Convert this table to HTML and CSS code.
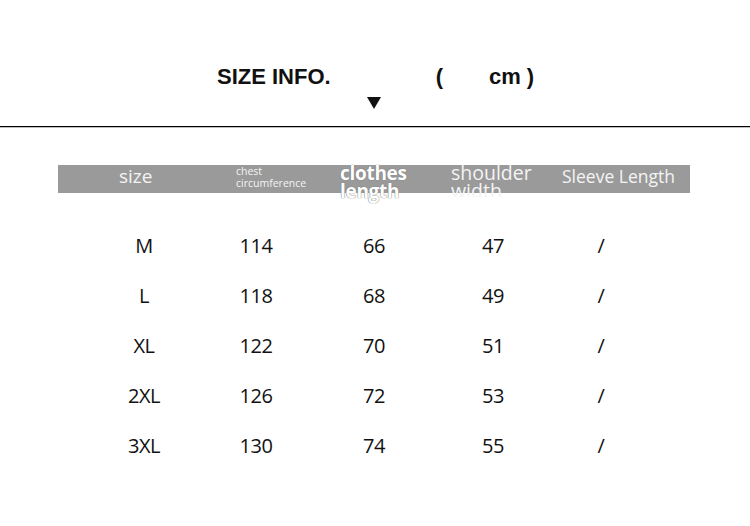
FILE: index.html
```html
<!DOCTYPE html>
<html>
<head>
<meta charset="utf-8">
<link rel="stylesheet" href="styles.css">
</head>
<body>
<div class="page">
  <div class="title-row">
    <span class="title">SIZE INFO.</span>
    <span class="paren-open">(</span>
    <span class="unit">cm</span>
    <span class="paren-close">)</span>
  </div>
  <div class="arrow"></div>
  <div class="rule"></div>
  <div class="head-bar">
    <div class="h-size">size</div>
    <div class="h-chest">chest<br>circumference</div>
    <div class="h-clothes">clothes<br>length</div>
    <div class="h-shoulder"><span class="clip">shoulder<br>width</span></div>
    <div class="h-sleeve">Sleeve Length</div>
  </div>
  <div class="rows">
    <div class="row"><span>M</span><span>114</span><span>66</span><span>47</span><span>/</span></div>
    <div class="row"><span>L</span><span>118</span><span>68</span><span>49</span><span>/</span></div>
    <div class="row"><span>XL</span><span>122</span><span>70</span><span>51</span><span>/</span></div>
    <div class="row"><span>2XL</span><span>126</span><span>72</span><span>53</span><span>/</span></div>
    <div class="row"><span>3XL</span><span>130</span><span>74</span><span>55</span><span>/</span></div>
  </div>
</div>
</body>
</html>
```
FILE: styles.css
```css
html, body {
  margin: 0;
  padding: 0;
  background: #ffffff;
}
.page {
  width: 750px;
  height: 526px;
  padding-top: 64px;
  box-sizing: border-box;
  overflow: hidden;
  color: #111;
}
.title-row {
  display: flex;
  height: 26px;
  line-height: 26px;
  padding-left: 217px;
  font-family: "Liberation Sans", Arial, sans-serif;
  font-weight: bold;
  font-size: 22px;
  white-space: nowrap;
}
.paren-open { margin-left: 105px; }
.unit { margin-left: 46px; }
.paren-close { margin-left: 6px; }
.arrow {
  margin-top: 7px;
  margin-left: 367px;
  width: 0;
  height: 0;
  border-left: 7px solid transparent;
  border-right: 7px solid transparent;
  border-top: 12px solid #111;
}
.rule {
  margin-top: 17px;
  height: 1px;
  background: #000;
  box-shadow: 0 0.5px 0 rgba(0,0,0,0.5);
}
.head-bar {
  margin-top: 38px;
  margin-left: 58px;
  width: 632px;
  height: 28px;
  background: #9a9a9a;
  display: grid;
  grid-template-columns: 178px 104px 111px 111px 128px;
  align-items: start;
  color: #f4f4f4;
  font-family: "Open Sans", sans-serif;
  white-space: nowrap;
}
.h-size {
  padding-left: 61px;
  font-size: 19px;
  line-height: 22px;
}
.h-chest {
  font-size: 10.5px;
  line-height: 12px;
}
.h-clothes {
  margin-top: -1px;
  font-size: 19px;
  font-weight: bold;
  line-height: 18px;
  color: #fff;
  letter-spacing: -0.3px;
  text-shadow: 0 0 1px #777, 0 0 1px #888;
}
.h-shoulder {
  margin-top: -1px;
  font-size: 19.5px;
  line-height: 18px;
}
.h-shoulder .clip {
  display: block;
  height: 33px;
  overflow: hidden;
}
.h-sleeve {
  font-size: 17.5px;
  line-height: 22px;
}
.rows {
  margin-top: 28px;
}
.row {
  display: grid;
  grid-template-columns: 112px 112px 124px 114px 102px;
  padding-left: 88px;
  height: 50px;
  line-height: 50px;
  font-family: "Open Sans", sans-serif;
  font-size: 20px;
  letter-spacing: -0.5px;
  text-align: center;
  color: #111;
}
```
